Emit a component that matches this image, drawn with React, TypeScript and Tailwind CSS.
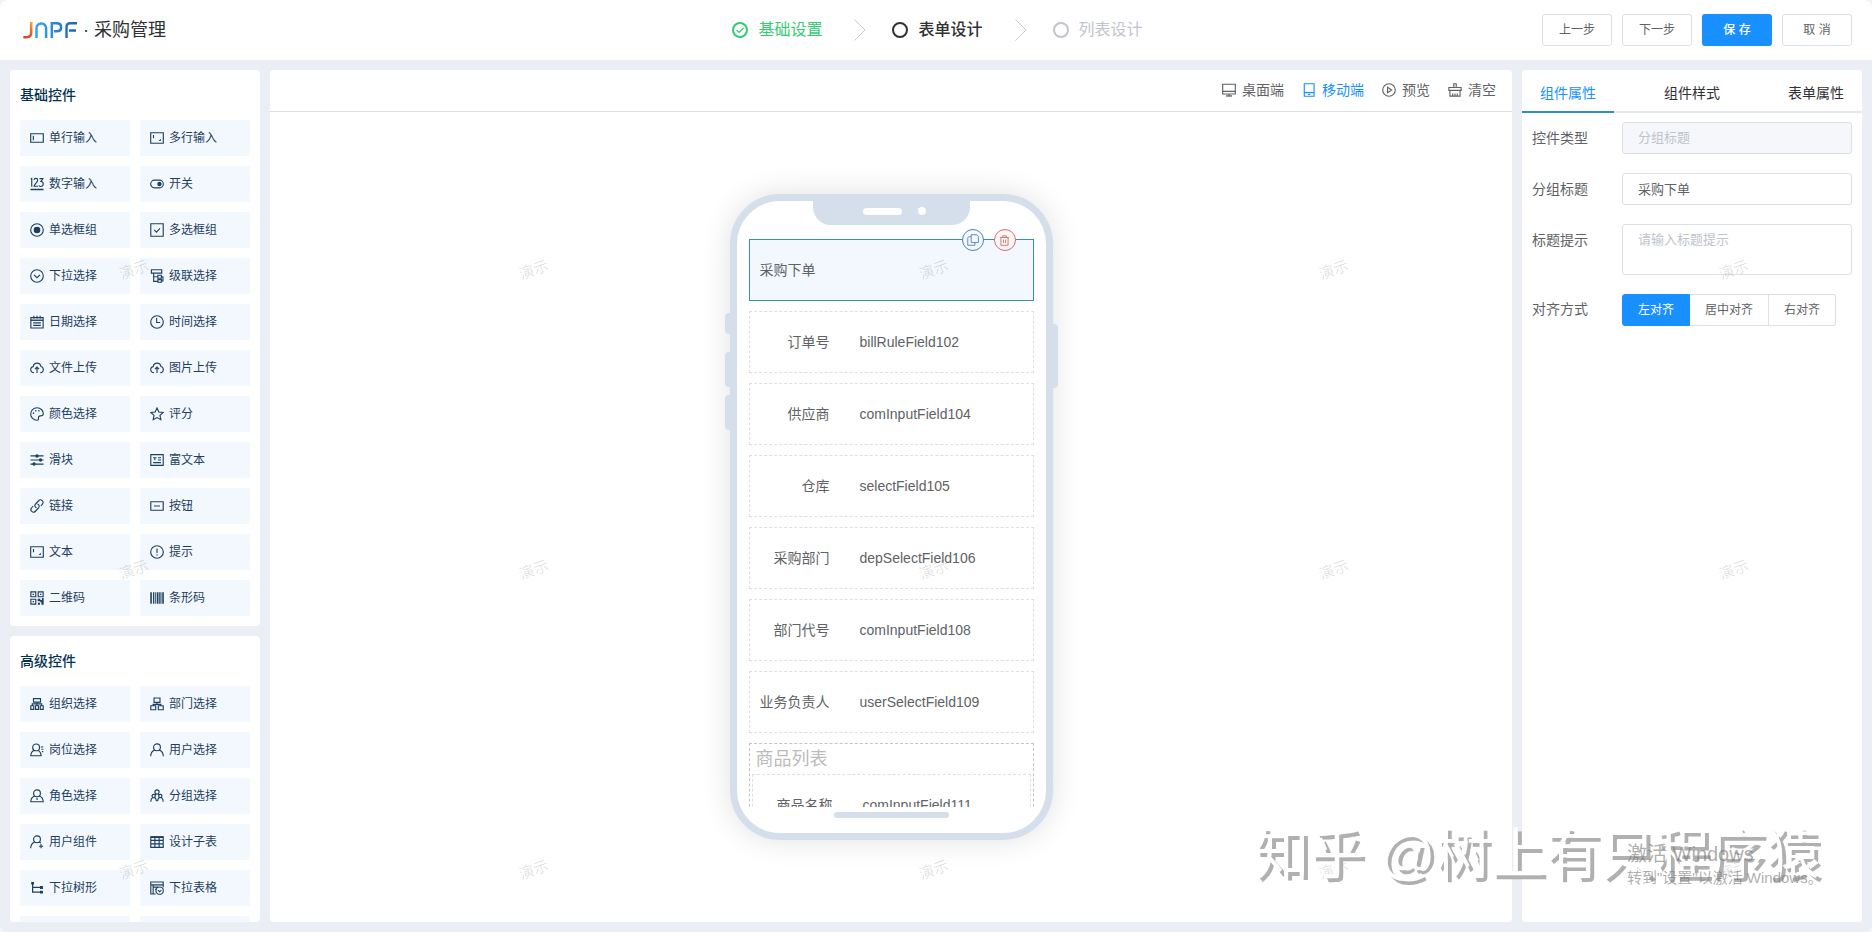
import React, { useState } from "react";

// ─────────────────────────────────────────────────────────────────────────────
// Icons
// ─────────────────────────────────────────────────────────────────────────────

// All drawn on a 16 × 16 grid, stroked with the current text colour.
const ICONS: Record<string, React.ReactNode> = {
  input: (
    <>
      <path d="M.8 3.2h14.4v9.6H.8zM3.8 5.4v5.2" />
    </>
  ),
  textarea: (
    <>
      <path d="M.8 2h14.4v12H.8zM4 4.6v3.6" />
      <path d="M12.4 8.8v2.6H9.8z" fill="currentColor" stroke="none" />
    </>
  ),
  number: (
    <>
      <path d="M.8 2.2 2 1.600v9.600M4.600 3.400c.2-2.400 4.200-2.400 4.200.2 0 2.200-4 4.400-4.200 7h4.600M10.800 1.800h4l-2.400 3.400c3.800.2 3.600 5.600-.2 5.600-1 0-1.600-.4-2-1.200" />
      <path d="M.5 14.200h15" strokeWidth="1.600" />
    </>
  ),
  switch: (
    <>
      <rect x=".8" y="3.6" width="14.4" height="8.8" rx="4.4" />
      <circle cx="10.8" cy="8" r="2.500" fill="currentColor" stroke="none" />
    </>
  ),
  radio: (
    <>
      <circle cx="8" cy="8" r="7.2" />
      <circle cx="8" cy="8" r="3.8" fill="currentColor" stroke="none" />
    </>
  ),
  checkbox: <path d="M.9.9h14.2v14.2H.9zM4.8 7.8l2.6 2.6 4-4.2" />,
  select: (
    <>
      <circle cx="8" cy="8" r="7.2" />
      <path d="m4.6 6.8 3.4 3.2 3.4-3.2" />
    </>
  ),
  cascader: (
    <>
      <path d="M1.600.9h11.800v3.800H1.600zM4.200 4.700v9.400H9M4.200 8.900H9M9 7.200h4v3.400H9zM9 12.200h4v3H9zM13 8.900h1.800v4.800H13" />
    </>
  ),
  date: (
    <>
      <path d="M1 3h14v11.8H1zM4.400.8v3.600M8 .8v3.600M11.600.8v3.600M3.600 9h8.800M3.600 11.800h8.800" />
      <path d="M1 6h14" strokeWidth="1.600" />
    </>
  ),
  time: (
    <>
      <circle cx="8" cy="8" r="7.2" />
      <path d="M7.6 3.4v5.2h4" />
    </>
  ),
  upload: (
    <path d="M4.600 13.400C2.200 13.400.8 11.800.8 9.800c0-1.800 1.200-3.100 2.800-3.400C4 4 5.800 2.400 8.100 2.400s4 1.600 4.400 3.900c1.600.400 2.700 1.700 2.700 3.500 0 2-1.400 3.600-3.600 3.600M8 13.800V7M5.600 9.200 8 6.800l2.400 2.400" />
  ),
  color: (
    <>
      <path d="M8 .9C4 .9.8 4.1.8 8S4 15.100 8 15.100c1.400 0 1.900-.900 1.700-2-.300-1.700.400-2.900 2.100-2.900 2 0 3.400-.700 3.400-2.500C15.200 3.800 12 .9 8 .9Z" />
      <circle cx="4" cy="7" r=".9" fill="currentColor" stroke="none" />
      <circle cx="6.600" cy="4.400" r=".9" fill="currentColor" stroke="none" />
      <circle cx="10.200" cy="4.400" r=".9" fill="currentColor" stroke="none" />
    </>
  ),
  rate: (
    <path d="m8 1.200 2.100 4.500 4.900.600-3.600 3.300 1 4.900L8 12.100l-4.400 2.400 1-4.900L1 6.300l4.900-.600Z" />
  ),
  slider: (
    <>
      <path d="M.5 3.400h15M.5 8h15M.5 12.600h15" strokeWidth="1.400" />
      <circle cx="8" cy="3.400" r="1.900" fill="currentColor" stroke="none" />
      <circle cx="12" cy="8" r="1.900" fill="currentColor" stroke="none" />
      <circle cx="4.600" cy="12.600" r="1.900" fill="currentColor" stroke="none" />
    </>
  ),
  editor: (
    <path d="M.9 1.800h14.200v12.400H.9zM3.600 5.400h3.800M5.500 5.400v3M9 5.400h3.600M9 8h3.600M3.600 11h9" />
  ),
  link: (
    <path d="M7.400 10.200c-2-.800-2.500-2.900-1-4.500l3.400-3.700c1.200-1.300 3-1.300 4.200-.2s1.300 2.900.2 4.100L12.400 8M8.600 5.800c2 .800 2.500 2.900 1 4.500L6.200 14c-1.200 1.300-3 1.300-4.200.2s-1.300-2.900-.2-4.100L3.600 8" />
  ),
  button: <path d="M.9 3.200h14.200v9.600H.9zM4.600 8h6.800" />,
  alert: (
    <>
      <circle cx="8" cy="8" r="7.200" />
      <path d="M8 4v5M8 10.600v1.400" />
    </>
  ),
  qrcode: (
    <>
      <path d="M1 1h5.600v5.600H1zM9.400 1H15v5.600H9.400zM1 9.400h5.600V15H1zM3 3.800h1.600M11.400 3.800H13M3 12.200h1.600" />
      <path
        d="M8.800 8.800h3v3h-3zM11.800 10.200h3.800v2.600h-3.800zM9 13.400h2.400v2.200H9zM13 12.600h2.600v3H13zM13.600 8h2v2.400h-2z"
        fill="currentColor"
        stroke="none"
      />
    </>
  ),
  barcode: (
    <>
      <path d="M1.200 1.500v13M8.600 1.500v13M14.900 1.500v13" strokeWidth="1.800" />
      <path d="M4 1.500v13M6 1.500v13M10.600 1.500v13M12.500 1.500v13" strokeWidth="1.200" />
    </>
  ),
  organize: (
    <>
      <path d="M4 1.800h8v4H4zM8 5.800v4M2.600 9.800V7.800h10.800v2M.9 10h3.400v4.200H.9zM6.300 10h3.400v4.200H6.300zM11.700 10h3.400v4.200h-3.400z" />
    </>
  ),
  department: (
    <path d="M4.600 1.200h6.800v5H4.600zM8 6.200v2.600M3.600 10V8.400h8.800V10M.9 10h5.600v4.600H.9zM9.500 10h5.600v4.600H9.500z" />
  ),
  position: (
    <>
      <circle cx="7" cy="5" r="3.900" />
      <path d="M4.600 8.200C2.400 9.400.9 11.600.9 14.600h11.800c0-2.800-1.200-4.800-3.200-6.200M12.400 4.600h2.800M13 7.200h2.200M13.600 9.800h1.600" />
    </>
  ),
  user: (
    <>
      <circle cx="8" cy="4.900" r="3.900" />
      <path d="M5.400 8C2.600 9.200.8 11.800.8 15M10.600 8c2.800 1.200 4.600 3.800 4.600 7" />
    </>
  ),
  role: (
    <>
      <circle cx="8" cy="4.900" r="3.900" />
      <path d="M5.400 8C2.600 9 .9 11.400.9 14.600h14.200c0-3.200-1.700-5.600-4.500-6.600M8 10v2.600" />
    </>
  ),
  group: (
    <>
      <circle cx="8" cy="3.400" r="2.400" />
      <circle cx="4.200" cy="8" r="1.900" />
      <circle cx="11.800" cy="8" r="1.900" />
      <path d="M6.600 5.600 5.600 7M9.400 5.600l1 1.400M3 9.800C1.600 10.800.9 12.600.9 14.600M5.200 9.800c1.200.800 2 2.200 2.200 4M13 9.800c1.400 1 2.100 2.800 2.100 4.800M10.800 9.800c-1.200.800-2 2.200-2.200 4" />
    </>
  ),
  userAdd: (
    <>
      <circle cx="8" cy="4.900" r="3.900" />
      <path d="M5.400 8C2.600 9.200.8 11.800.8 15M10.600 8c.700.300 1.300.800 1.800 1.400M12.600 10.400v4.800M10.200 12.800H15" />
    </>
  ),
  table: (
    <>
      <path d="M.9 2h14.200v12.200H.9zM.9 6.200h14.200M.9 10.200h14.200M5.600 2v12.200M10.400 2v12.200" />
      <path d="M.9 2.400h14.200" strokeWidth="1.800" />
    </>
  ),
  treeSelect: (
    <>
      <path d="M3 2.600v10h8.600M3 7.400h8.600" strokeWidth="1.400" />
      <path
        d="M1.400 1h3.200v3H1.400zM11.400 5.800h3.400V9h-3.400zM11.400 11.200h3.400v3.200h-3.400z"
        fill="currentColor"
        stroke="none"
      />
    </>
  ),
  tableSelect: (
    <>
      <path d="M15.100 7V1.200H.9v13.600h5.600M.9 4.400h14.200M3.600 7h5.800M3.600 4.400v10.400M5.800 9.600h1.400" />
      <circle cx="11" cy="11" r="4.200" />
      <path d="m9 10.400 2 1.800 2-1.800" />
    </>
  ),
  desktop: (
    <>
      <path d="M.8 1.400h14.400v11.200H.8zM.8 9.600h14.400M8 12.600v2" />
      <path d="M4.600 14.800h6.800" strokeWidth="1.600" />
    </>
  ),
  mobile: <path d="M2.600.8h11.200v14.400H2.600zM2.600 11h11.200M6.800 13.200h2.800" />,
  preview: (
    <>
      <circle cx="8" cy="8" r="7.200" />
      <path d="M6.400 5v6l4.600-3Z" />
    </>
  ),
  clear: (
    <path d="M6.600 5.200V.8h2.800v4.400M1 5.200h14v3.200H1zM2.200 8.400v6.600h11.600V8.400M5.400 12v3M8 12v3M10.600 12v3" />
  ),
  copy: (
    <path d="M5.600 1h7.600l2 2v8.400H5.600zM5.600 3.600H3.200C2 3.600 1 4.400 1 5.800V15h9.600v-3.600" />
  ),
  trash: (
    <path d="M1.600 3.600h12.800M5.400 3.600V1.200h5.200v2.400M2.800 3.600V15h10.400V3.600M6.400 6.600v5M9.600 6.600v5" />
  ),
};

function Icon({ name, className }: { name: string; className?: string }) {
  return (
    <svg
      viewBox="0 0 16 16"
      className={className ?? "size-3.5 shrink-0"}
      fill="none"
      stroke="currentColor"
      strokeWidth="1.3"
      aria-hidden="true"
    >
      {ICONS[name]}
    </svg>
  );
}

function Logo() {
  return (
    <svg viewBox="0 0 54 17" className="h-[17px] w-[54px]" fill="none" role="img" aria-label="JNPF">
      <defs>
        <linearGradient id="logo-warm" x1="0" y1="0" x2="0" y2="1">
          <stop offset="0" stopColor="#f5a13c" />
          <stop offset="1" stopColor="#d9482b" />
        </linearGradient>
        <linearGradient id="logo-cool" gradientUnits="userSpaceOnUse" x1="12" y1="0" x2="54" y2="0">
          <stop offset="0" stopColor="#35a8ee" />
          <stop offset="1" stopColor="#1f62b8" />
        </linearGradient>
      </defs>
      <path d="M8.200 0v10.500c0 3-1.800 4.700-4.500 4.700H.300" stroke="url(#logo-warm)" strokeWidth="2.500" />
      <g stroke="url(#logo-cool)" strokeWidth="2.500">
        <path d="M13.500 16V6.500c0-3 2-5 4.800-5s4.800 2 4.800 5V16" />
        <path d="M28.800 16V1.300h5c2.800 0 4.300 1.600 4.300 4s-1.500 4-4.300 4H31" />
        <path d="M43.500 16V5c0-2.400 1.300-3.700 3.600-3.700H54M46 8.600h7" />
      </g>
    </svg>
  );
}

// ─────────────────────────────────────────────────────────────────────────────
// Data
// ─────────────────────────────────────────────────────────────────────────────

const BASIC_CONTROLS = [
  ["input", "单行输入"],
  ["textarea", "多行输入"],
  ["number", "数字输入"],
  ["switch", "开关"],
  ["radio", "单选框组"],
  ["checkbox", "多选框组"],
  ["select", "下拉选择"],
  ["cascader", "级联选择"],
  ["date", "日期选择"],
  ["time", "时间选择"],
  ["upload", "文件上传"],
  ["upload", "图片上传"],
  ["color", "颜色选择"],
  ["rate", "评分"],
  ["slider", "滑块"],
  ["editor", "富文本"],
  ["link", "链接"],
  ["button", "按钮"],
  ["textarea", "文本"],
  ["alert", "提示"],
  ["qrcode", "二维码"],
  ["barcode", "条形码"],
];

const ADVANCED_CONTROLS = [
  ["organize", "组织选择"],
  ["department", "部门选择"],
  ["position", "岗位选择"],
  ["user", "用户选择"],
  ["role", "角色选择"],
  ["group", "分组选择"],
  ["userAdd", "用户组件"],
  ["table", "设计子表"],
  ["treeSelect", "下拉树形"],
  ["tableSelect", "下拉表格"],
  ["", ""],
  ["", ""],
];

const FIELDS = [
  ["订单号", "billRuleField102"],
  ["供应商", "comInputField104"],
  ["仓库", "selectField105"],
  ["采购部门", "depSelectField106"],
  ["部门代号", "comInputField108"],
  ["业务负责人", "userSelectField109"],
];

const TOOLS = [
  ["desktop", "桌面端"],
  ["mobile", "移动端"],
  ["preview", "预览"],
  ["clear", "清空"],
];

// ─────────────────────────────────────────────────────────────────────────────
// Header
// ─────────────────────────────────────────────────────────────────────────────

function StepArrow() {
  return (
    <svg viewBox="0 0 12 22" className="mr-[26px] ml-8 h-[22px] w-3" fill="none" stroke="#c8cbd2" aria-hidden="true">
      <path d="m.500.500 10.500 10.500L.500 21.500" />
    </svg>
  );
}

function Header() {
  const plainBtn =
    "h-8 w-[70px] rounded-[3px] border border-[#dcdfe6] bg-white text-xs text-[#606266]";
  return (
    <header className="grid h-[60px] shrink-0 grid-cols-[1fr_auto_1fr] items-center bg-white pr-5 pl-[23px]">
      <div className="flex items-center">
        <Logo />
        <h1 className="ml-1.5 text-lg text-[#303133]">· 采购管理</h1>
      </div>
      <ol className="flex items-center text-base">
        <li className="flex items-center gap-2.5 text-[#33cc74]">
          <svg viewBox="0 0 16 16" className="size-4" fill="none" stroke="currentColor" aria-hidden="true">
            <circle cx="8" cy="8" r="7" strokeWidth="2" />
            <path d="m4.600 8 2.600 2.400 4.400-4.400" strokeWidth="1.300" />
          </svg>
          基础设置
        </li>
        <StepArrow />
        <li className="flex items-center gap-2.5 font-medium text-[#303133]" aria-current="step">
          <span className="size-4 rounded-full border-2" />
          表单设计
        </li>
        <StepArrow />
        <li className="flex items-center gap-2.5 text-[#c0c4cc]">
          <span className="size-4 rounded-full border-2" />
          列表设计
        </li>
      </ol>
      <div className="flex justify-end gap-2.5">
        <button className={plainBtn}>上一步</button>
        <button className={plainBtn}>下一步</button>
        <button className="h-8 w-[70px] rounded-[3px] bg-[#1890ff] text-xs font-medium text-white">
          保 存
        </button>
        <button className={plainBtn}>取 消</button>
      </div>
    </header>
  );
}

// ─────────────────────────────────────────────────────────────────────────────
// Left: control palette
// ─────────────────────────────────────────────────────────────────────────────

function ControlGroup({ title, items }: { title: string; items: string[][] }) {
  return (
    <>
      <h2 className="flex h-[50px] items-center text-sm font-medium text-[#043254]">{title}</h2>
      <div className="grid grid-cols-2 gap-2.5">
        {items.map(([icon, label], i) => (
          <button
            key={i}
            className="flex h-9 items-center gap-[5px] bg-[#f3f8fe] px-2.5 text-xs text-[#1d4060]"
          >
            {icon && <Icon name={icon} />}
            {label}
          </button>
        ))}
      </div>
    </>
  );
}

// ─────────────────────────────────────────────────────────────────────────────
// Centre: phone preview
// ─────────────────────────────────────────────────────────────────────────────

function FieldRow({ label, value }: { label: string; value: string }) {
  return (
    <div className="flex h-[62px] shrink-0 items-center gap-[30px] border border-dashed border-[#e2dde2] pl-2.5">
      <span className="w-[70px] text-right whitespace-nowrap">{label}</span>
      <span>{value}</span>
    </div>
  );
}

function Phone() {
  return (
    <div className="relative">
      {/* side keys */}
      <i className="absolute top-[119px] -left-[5px] h-[21px] w-[5px] rounded-l-sm bg-[#d5dfec]" />
      <i className="absolute top-[158px] -left-[5px] h-[35px] w-[5px] rounded-l-sm bg-[#d5dfec]" />
      <i className="absolute top-[201px] -left-[5px] h-[35px] w-[5px] rounded-l-sm bg-[#d5dfec]" />
      <i className="absolute top-[130px] -right-[5px] h-16 w-[5px] rounded-r-sm bg-[#d5dfec]" />

      <div className="flex h-[646px] w-[323px] flex-col rounded-[50px] border-[7px] border-[#d5dfec] bg-white shadow-[0_0_30px_rgba(0,0,0,0.12)]">
        <div className="mx-auto flex h-6 w-[157px] shrink-0 items-center rounded-b-[18px] bg-[#d5dfec] pb-1 pl-[50px]">
          <span className="h-[7px] w-[39px] rounded-full bg-white" />
          <span className="ml-4 size-2 rounded-full bg-white" />
        </div>

        <div className="flex min-h-0 flex-1 flex-col gap-2.5 overflow-hidden px-3 pt-3.5 text-sm text-[#606266]">
          <div className="relative flex h-[62px] shrink-0 items-center border border-[#3590ad] bg-[#f3f8fe] pl-2.5">
            采购下单
            <div className="absolute -top-[11px] right-[17px] flex gap-2.5">
              <button
                aria-label="复制"
                className="flex size-[22px] items-center justify-center rounded-full border border-[#4a86b8] bg-[#f3f8fe] text-[#5a8dbb]"
              >
                <Icon name="copy" className="size-3" />
              </button>
              <button
                aria-label="删除"
                className="flex size-[22px] items-center justify-center rounded-full border border-[#d0706f] bg-[#fef6f6] text-[#c8705f]"
              >
                <Icon name="trash" className="size-[11px]" />
              </button>
            </div>
          </div>
          {FIELDS.map(([label, value]) => (
            <FieldRow key={value} label={label} value={value} />
          ))}
          <div className="shrink-0 border border-dashed border-[#c4c4c4] px-0.5">
            <h3 className="flex h-[30px] items-center pl-1 text-lg text-[#bbb]">商品列表</h3>
            <FieldRow label="商品名称" value="comInputField111" />
          </div>
        </div>

        <div className="h-[26px] shrink-0 pt-[5px]">
          <div className="mx-auto h-1.5 w-[115px] rounded-full bg-[#d5dfec]" />
        </div>
      </div>
    </div>
  );
}

function Canvas() {
  return (
    <main className="flex min-w-0 flex-1 flex-col rounded bg-white">
      <div className="flex h-[42px] shrink-0 items-center justify-end gap-[18px] border-b border-[#dcdfe6] pr-4 pb-0.5 text-sm">
        {TOOLS.map(([icon, label]) => (
          <button
            key={icon}
            className={`flex items-center gap-1.5 ${icon === "mobile" ? "text-[#1890ff]" : "text-[#606266]"}`}
          >
            <Icon name={icon} />
            {label}
          </button>
        ))}
      </div>
      <div className="flex min-h-0 flex-1 items-center justify-center">
        <Phone />
      </div>
    </main>
  );
}

// ─────────────────────────────────────────────────────────────────────────────
// Right: property panel
// ─────────────────────────────────────────────────────────────────────────────

const ALIGNS = ["左对齐", "居中对齐", "右对齐"];

function PropertyPanel() {
  const [title, setTitle] = useState("采购下单");
  const [align, setAlign] = useState(ALIGNS[0]);
  const label = "w-[90px] shrink-0 leading-8";
  const field = "min-w-0 flex-1 rounded-[3px] border border-[#dcdfe6] px-[15px] text-[13px]";

  return (
    <aside className="w-[340px] shrink-0 rounded bg-white text-sm text-[#606266]">
      <div role="tablist" className="flex h-[43px] justify-between shadow-[inset_0_-2px_0_#e4e7ed]">
        <button role="tab" aria-selected="true" className="border-b-2 border-[#2f8fc4] px-[18px] pt-1 text-[#1890ff]">
          组件属性
        </button>
        <button role="tab" aria-selected="false" className="border-b-2 border-transparent px-[18px] pt-1 text-[#303133]">
          组件样式
        </button>
        <button role="tab" aria-selected="false" className="border-b-2 border-transparent px-[18px] pt-1 text-[#303133]">
          表单属性
        </button>
      </div>

      <form className="flex flex-col gap-[19px] px-2.5 pt-[9px]">
        <div className="flex">
          <label htmlFor="type" className={label}>控件类型</label>
          <input
            id="type"
            disabled
            placeholder="分组标题"
            className={`${field} h-8 bg-[#f5f7fa] pb-0.5 placeholder:text-[#c0c4cc]`}
          />
        </div>
        <div className="flex">
          <label htmlFor="title" className={label}>分组标题</label>
          <input
            id="title"
            value={title}
            onChange={(e) => setTitle(e.target.value)}
            className={`${field} h-8 pb-0.5`}
          />
        </div>
        <div className="flex">
          <label htmlFor="hint" className={label}>标题提示</label>
          <textarea
            id="hint"
            placeholder="请输入标题提示"
            className={`${field} h-[51px] resize-none py-[5px] leading-5 placeholder:text-[#c0c4cc]`}
          />
        </div>
        <fieldset className="flex">
          <legend className="float-left w-[90px] leading-[30px]">对齐方式</legend>
          {ALIGNS.map((a) => (
            <label
              key={a}
              className="h-8 cursor-pointer border-y border-r border-[#dcdfe6] px-[15px] text-xs leading-[30px] first-of-type:rounded-l-[3px] first-of-type:border-l last-of-type:rounded-r-[3px] has-checked:border-[#1890ff] has-checked:bg-[#1890ff] has-checked:text-white"
            >
              <input
                type="radio"
                name="align"
                className="sr-only"
                checked={align === a}
                onChange={() => setAlign(a)}
              />
              {a}
            </label>
          ))}
        </fieldset>
      </form>
    </aside>
  );
}

// ─────────────────────────────────────────────────────────────────────────────
// Watermarks
// ─────────────────────────────────────────────────────────────────────────────

function Watermarks() {
  return (
    <div className="pointer-events-none absolute inset-0 overflow-hidden" aria-hidden="true">
      <div className="grid w-[2000px] auto-rows-[300px] grid-cols-[repeat(5,400px)]">
        {Array.from({ length: 15 }, (_, i) => (
          <span key={i} className="pt-[260px] pl-[119px] text-[15px] leading-5 text-black/12">
            <span className="inline-block -rotate-20">演示</span>
          </span>
        ))}
      </div>
      <p className="absolute right-[52px] bottom-[38px] text-[55px] leading-[80px] whitespace-nowrap text-white [text-shadow:4px_4px_0_#b0b0b0]">
        知乎 @树上有只程序猿
      </p>
      <div className="absolute right-[50px] bottom-[44px] w-[195px] text-[#777]/60">
        <p className="text-xl leading-7 whitespace-nowrap">激活 Windows</p>
        <p className="text-[15px] leading-5 whitespace-nowrap">转到"设置"以激活 Windows。</p>
      </div>
    </div>
  );
}

export default function App() {
  return (
    <div className="h-screen bg-[#f4f4f4] font-['Liberation_Sans','Noto_Sans_CJK_SC',sans-serif]">
      <div className="relative flex h-full flex-col overflow-hidden rounded-lg bg-[#ebeef5]">
        <Header />
        <div className="flex min-h-0 flex-1 gap-2.5 p-2.5">
          <div className="flex w-[250px] shrink-0 flex-col gap-2.5">
            <section className="shrink-0 rounded bg-white px-2.5 pb-2.5">
              <ControlGroup title="基础控件" items={BASIC_CONTROLS} />
            </section>
            <section className="min-h-0 flex-1 overflow-hidden rounded bg-white px-2.5">
              <ControlGroup title="高级控件" items={ADVANCED_CONTROLS} />
            </section>
          </div>
          <Canvas />
          <PropertyPanel />
        </div>
        <Watermarks />
      </div>
    </div>
  );
}
